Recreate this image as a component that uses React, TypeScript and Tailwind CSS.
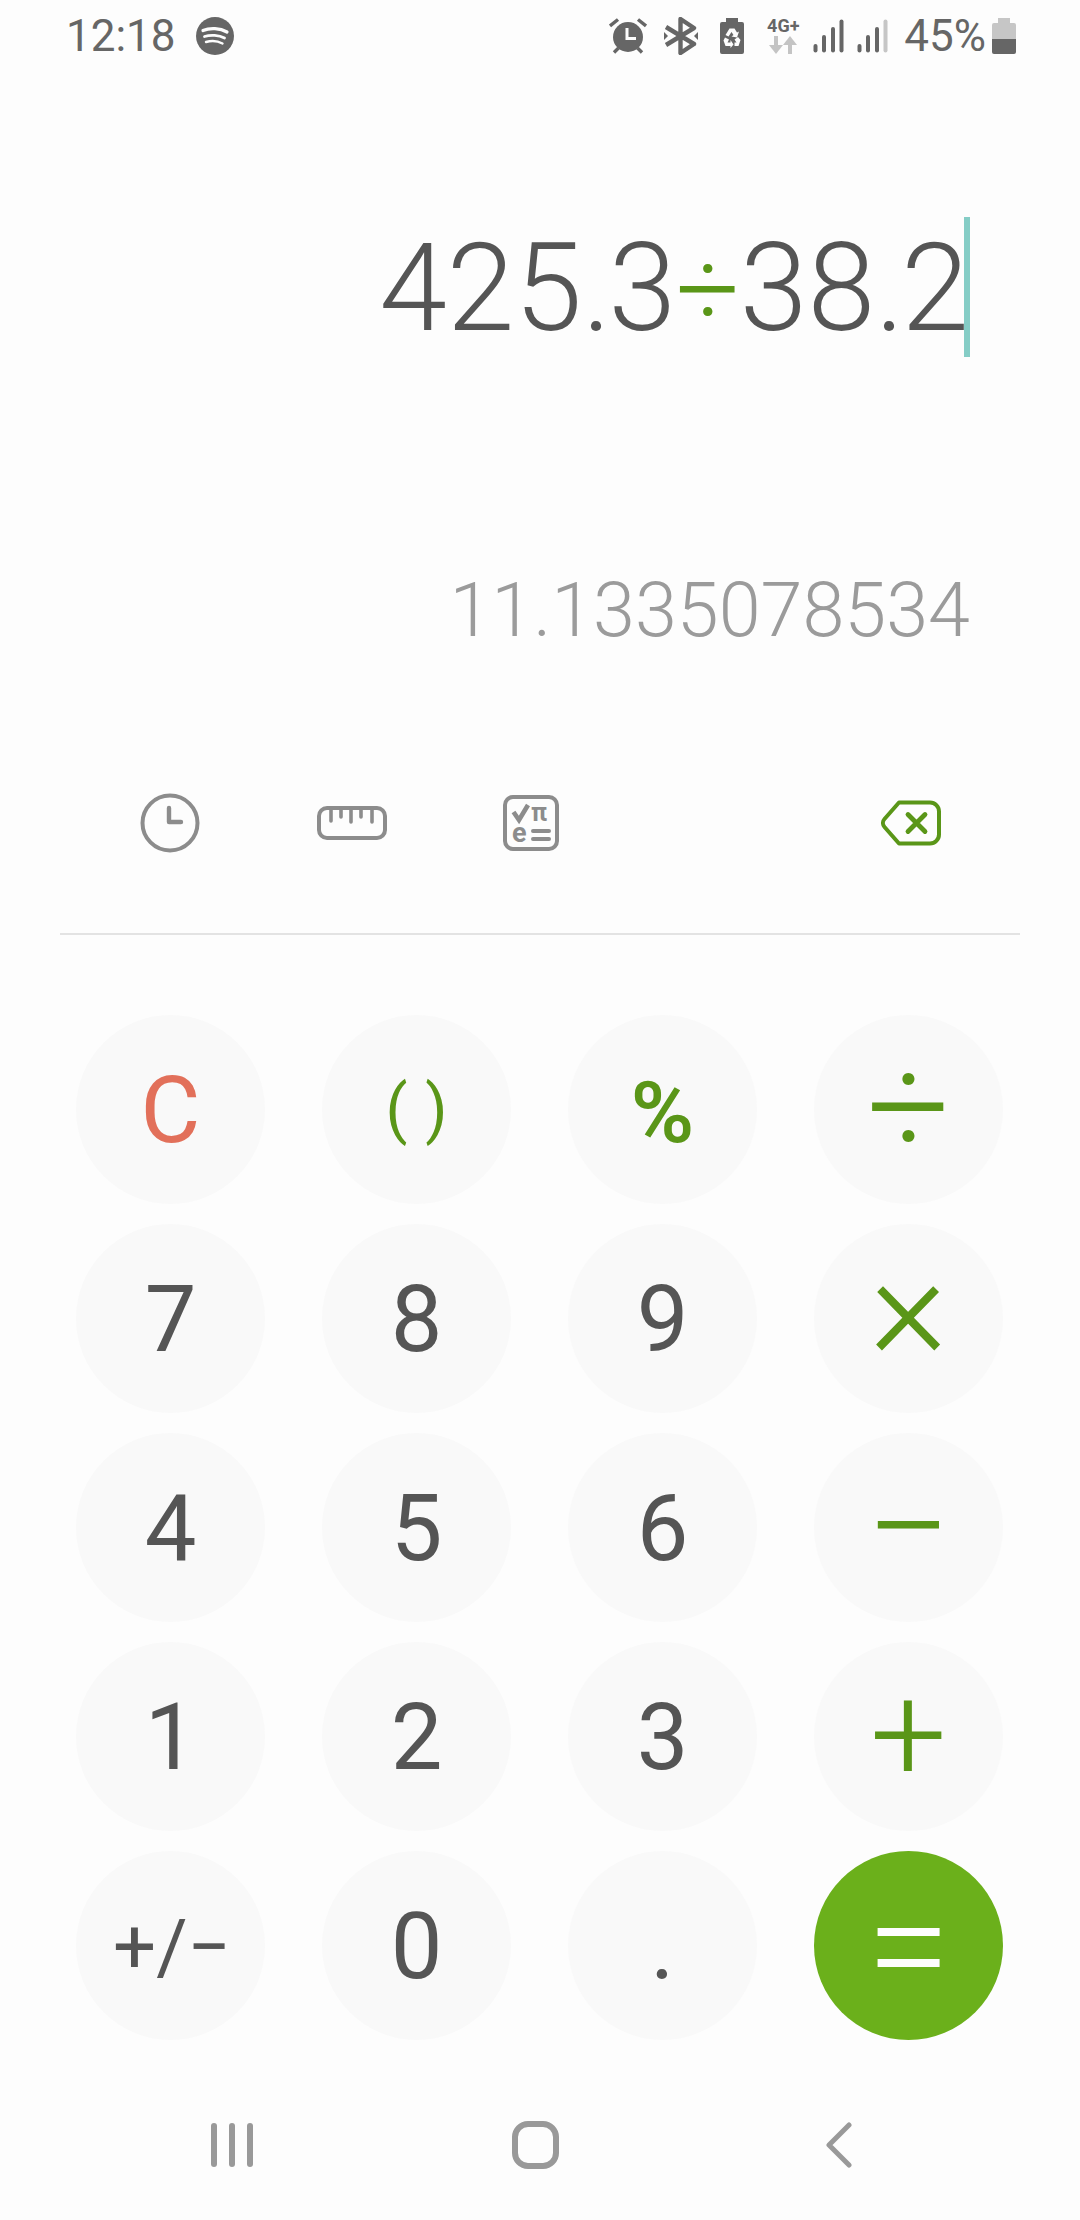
const font = { fontFamily: "Roboto, 'Liberation Sans', sans-serif" };

function Spotify() {
  return (
    <svg width="38" height="38" viewBox="0 0 38 38" className="ml-[20px]">
      <circle cx="19" cy="19" r="19" fill="#666" />
      <g fill="none" stroke="#fdfdfd" strokeLinecap="round">
        <path d="M7 13.5C14 10.5 24 11 31 15" strokeWidth="3.2" />
        <path d="M8.5 19.5C14.5 17.5 23 18 28.5 21" strokeWidth="2.8" />
        <path d="M10 25C15 23.5 22 24 26.5 26.5" strokeWidth="2.4" />
      </g>
    </svg>
  );
}

function Alarm() {
  return (
    <svg width="38" height="36" viewBox="0 0 38 36">
      <circle cx="19" cy="19" r="15" fill="#666" />
      <path d="M1 8L9 1.5M37 8L29 1.5" stroke="#666" strokeWidth="3.4" />
      <path d="M5 34.5L9.5 30M33 34.5L28.5 30" stroke="#666" strokeWidth="3.4" />
      <path d="M18 10V20.5H27" fill="none" stroke="#fdfdfd" strokeWidth="3" />
    </svg>
  );
}

function Bluetooth() {
  return (
    <svg width="34" height="38" viewBox="0 0 34 38">
      <path d="M2 10L30 27L16.5 36V2L30 11L2 28" fill="none" stroke="#666" strokeWidth="4.4" strokeLinejoin="round" />
      <path d="M0 15L4 19L0 23ZM34 15L30 19L34 23Z" fill="#666" />
    </svg>
  );
}

function BatteryRecycle() {
  return (
    <svg width="24" height="36" viewBox="0 0 24 36">
      <path d="M6 0H18V4H22A2 2 0 0 1 24 6V34A2 2 0 0 1 22 36H2A2 2 0 0 1 0 34V6A2 2 0 0 1 2 4H6Z" fill="#666" />
      <g fill="#fdfdfd">
        <path d="M9.5 10.5H14.5L17 14.5L19 13.5L17 19.5L11.5 18.5L13.5 17L11.5 14L8.5 18.5L5.5 17Z" />
        <path d="M3.5 22.5L5 19.5L9 21.5L7.5 24.5H10.5V22L13.5 26.5L10.5 30V28H5.5Z" />
        <path d="M20.5 22L18 19L14.5 21.5L16.5 24.5H14.5V28H18.5Z" />
      </g>
    </svg>
  );
}

function DataArrows() {
  return (
    <svg width="28" height="18" viewBox="0 0 28 18" className="mt-[3px]">
      <path d="M7 0V10" stroke="#c4c4c4" strokeWidth="4" />
      <path d="M0 9H14L7 18Z" fill="#c4c4c4" />
      <path d="M21 18V8" stroke="#c4c4c4" strokeWidth="4" />
      <path d="M14 9H28L21 0Z" fill="#c4c4c4" />
    </svg>
  );
}

function Signal({ last }: { last: string }) {
  return (
    <svg width="31" height="34" viewBox="0 0 31 34">
      <g strokeLinecap="round" strokeWidth="4">
        <path d="M2.5 27V31.5" stroke="#666" />
        <path d="M11 18V31.5" stroke="#666" />
        <path d="M20 10V31.5" stroke="#666" />
        <path d="M28.5 2.5V31.5" stroke={last} />
      </g>
    </svg>
  );
}

function Battery() {
  return (
    <svg width="24" height="36" viewBox="0 0 24 36">
      <path d="M6 0H18V5H22A2 2 0 0 1 24 7V21H0V7A2 2 0 0 1 2 5H6Z" fill="#c6c6c6" />
      <path d="M0 21H24V34A2 2 0 0 1 22 36H2A2 2 0 0 1 0 34Z" fill="#666" />
    </svg>
  );
}

function Clock() {
  return (
    <svg width="60" height="60" viewBox="0 0 60 60">
      <circle cx="30" cy="30" r="27.5" fill="none" stroke="#8c8c8c" strokeWidth="4" />
      <path d="M29 15V29H41" fill="none" stroke="#8c8c8c" strokeWidth="4.4" strokeLinecap="round" strokeLinejoin="round" />
    </svg>
  );
}

function Ruler() {
  return (
    <svg width="70" height="34" viewBox="0 0 70 34">
      <rect x="2" y="2" width="66" height="30" rx="8" fill="none" stroke="#8c8c8c" strokeWidth="4" />
      <path d="M14 3V15M24 3V11M34 3V16M44 3V11M55 3V16" stroke="#8c8c8c" strokeWidth="3.6" strokeLinecap="round" />
    </svg>
  );
}

function Formula() {
  return (
    <svg width="56" height="56" viewBox="0 0 56 56">
      <rect x="2" y="2" width="52" height="52" rx="8" fill="none" stroke="#8c8c8c" strokeWidth="4" />
      <path d="M10.5 17L16 25L25 10" fill="none" stroke="#8c8c8c" strokeWidth="4.6" />
      <text x="28" y="26" fontSize="25" fontWeight="700" fill="#8c8c8c" fontFamily="Roboto, sans-serif">π</text>
      <text x="9" y="47" fontSize="27" fontWeight="700" fill="#8c8c8c" fontFamily="Roboto, sans-serif">e</text>
      <path d="M30 36H46M30 44H46" stroke="#8c8c8c" strokeWidth="4" strokeLinecap="round" />
    </svg>
  );
}

function Backspace() {
  return (
    <svg width="60" height="46" viewBox="0 0 60 46">
      <path d="M18 2.5H49A9 9 0 0 1 58 11.5V34.5A9 9 0 0 1 49 43.5H18L3.5 27A6 6 0 0 1 3.5 19Z" fill="none" stroke="#5a9618" strokeWidth="4" strokeLinejoin="round" />
      <path d="M27 14.5L44 31.5M44 14.5L27 31.5" stroke="#5a9618" strokeWidth="4.8" strokeLinecap="round" />
    </svg>
  );
}

type KeyDef = { label: string; cls: string; bg?: string };

const digit = "text-[#555555] text-[92px] font-normal pt-[3px]";

const keys: KeyDef[] = [
  { label: "C", cls: "text-[#e2705a] text-[92px] font-normal pt-[3px]" },
  { label: "( )", cls: "text-[#5a9618] text-[64px] font-normal [word-spacing:2px]" },
  { label: "%", cls: "text-[#5a9618] text-[86px] font-semibold pt-[6px]" },
  { label: "÷", cls: "text-[#5a9618] text-[146px] font-light pb-[3px]" },
  { label: "7", cls: digit },
  { label: "8", cls: digit },
  { label: "9", cls: digit },
  { label: "×", cls: "text-[#5a9618] text-[150px] font-light pb-[24px]" },
  { label: "4", cls: digit },
  { label: "5", cls: digit },
  { label: "6", cls: digit },
  { label: "−", cls: "text-[#5a9618] text-[150px] font-light" },
  { label: "1", cls: digit },
  { label: "2", cls: digit },
  { label: "3", cls: digit },
  { label: "+", cls: "text-[#5a9618] text-[136px] font-light pb-[4px]" },
  { label: "+/−", cls: "text-[#555555] text-[76px] font-normal pt-[3px] pl-[3px]" },
  { label: "0", cls: digit },
  { label: ".", cls: digit },
  { label: "=", cls: "text-[#fdfdfd] text-[152px] font-light", bg: "bg-[#6bb01b]" },
];

export default function App() {
  return (
    <div style={font} className="w-[1080px] h-[2220px] bg-[#fdfdfd] flex flex-col overflow-hidden">
      <div className="h-[72px] pl-[66px] pr-[64px] flex items-center justify-between">
        <div className="flex items-center">
          <span className="text-[44px] leading-none text-[#666666] font-normal">12:18</span>
          <Spotify />
        </div>
        <div className="flex items-center">
          <Alarm />
          <div className="ml-[17px]"><Bluetooth /></div>
          <div className="ml-[22px]"><BatteryRecycle /></div>
          <div className="ml-[21px] w-[36px] flex flex-col items-center">
            <span className="text-[18px] leading-[15px] font-bold text-[#666666] whitespace-nowrap">4G+</span>
            <DataArrows />
          </div>
          <div className="ml-[12px]"><Signal last="#666" /></div>
          <div className="ml-[13px]"><Signal last="#c6c6c6" /></div>
          <span className="ml-[16px] text-[44px] leading-none text-[#666666]">45%</span>
          <div className="ml-[6px]"><Battery /></div>
        </div>
      </div>

      <div className="mt-[145px] h-[140px] pr-[110px] flex items-center justify-end">
        <div className="text-[122px] leading-[140px] font-light text-[#555555] whitespace-nowrap mr-[-5px] pt-[4px]">
          425<span className="tracking-[-3px]">.</span>3<span className="text-[#5a9618] text-[112px] [vertical-align:3px]">÷</span>38<span className="tracking-[-3px]">.</span>2
        </div>
        <div className="w-[6px] h-[140px] bg-[#85cdc6]"></div>
      </div>

      <div className="mt-[208px] h-[90px] pr-[110px] flex items-center justify-end text-[75.5px] leading-[90px] font-light text-[#9b9b9b]">
        11.1335078534
      </div>

      <div className="mt-[138px] h-[60px] relative flex items-center">
        <div className="ml-[140px]"><Clock /></div>
        <div className="ml-[117px]"><Ruler /></div>
        <div className="ml-[116px]"><Formula /></div>
        <div className="ml-[322px]"><Backspace /></div>
      </div>

      <div className="mt-[80px] mx-[60px] h-[2px] bg-[#e3e3e3]"></div>

      <div className="mt-[80px] pl-[76px] grid grid-cols-[repeat(4,189px)] gap-x-[57px] gap-y-[20px]">
        {keys.map((k) => (
          <div key={k.label} className={`h-[189px] rounded-full flex items-center justify-center leading-none ${k.bg ?? "bg-[#f9f9f9]"} ${k.cls}`}>
            {k.label}
          </div>
        ))}
      </div>

      <div className="mt-[81px] flex items-center h-[48px]">
        <div className="ml-[211px] flex gap-[12px]">
          <div className="w-[6px] h-[44px] rounded-full bg-[#999999]"></div>
          <div className="w-[6px] h-[44px] rounded-full bg-[#999999]"></div>
          <div className="w-[6px] h-[44px] rounded-full bg-[#999999]"></div>
        </div>
        <div className="ml-[259px] w-[47px] h-[48px] rounded-[16px] border-[6px] border-[#999999]"></div>
        <svg width="26" height="46" viewBox="0 0 26 46" className="ml-[267px]">
          <path d="M23 3L3 23L23 43" fill="none" stroke="#999999" strokeWidth="5" strokeLinecap="round" strokeLinejoin="round" />
        </svg>
      </div>
    </div>
  );
}
